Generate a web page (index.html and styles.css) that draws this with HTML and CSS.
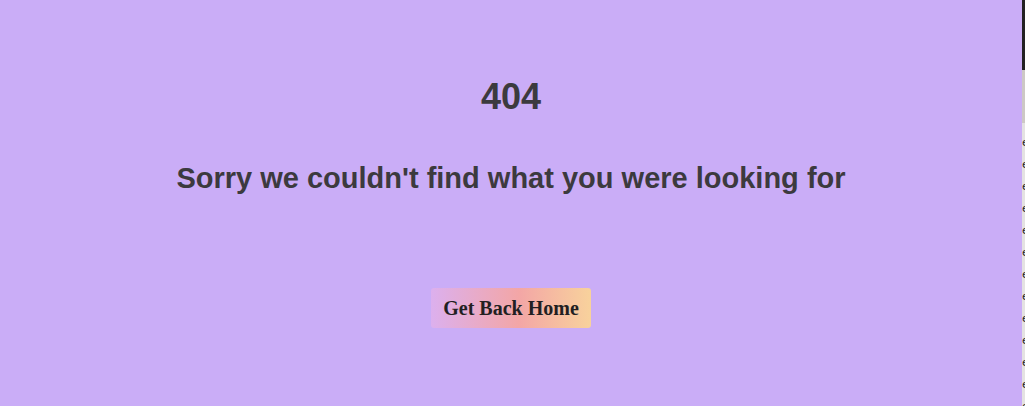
FILE: index.html
```html
<!DOCTYPE html>
<html lang="en">
<head>
<meta charset="utf-8">
<title>404</title>
<link rel="stylesheet" href="styles.css">
</head>
<body>
<div class="page">
  <main class="main">
    <h1 class="code">404</h1>
    <h2 class="message">Sorry we couldn't find what you were looking for</h2>
    <a class="home-btn" href="#">Get Back Home</a>
  </main>
  <aside class="edge">
    <div class="edge-dark"></div>
    <div class="edge-gray"></div>
    <div class="edge-text">e<br>e<br>e<br>e<br>e<br>e<br>e<br>e<br>e<br>e<br>e<br>e<br>e</div>
  </aside>
</div>
</body>
</html>
```
FILE: styles.css
```css
html, body {
  margin: 0;
  padding: 0;
  height: 100%;
  overflow: hidden;
}
body {
  background: #caadf7;
  font-family: "Liberation Sans", Arial, Helvetica, sans-serif;
}
.page {
  display: flex;
  height: 406px;
}
.main {
  width: 1022px;
  flex: none;
  background: #caadf7;
  display: flex;
  flex-direction: column;
  align-items: center;
  padding-top: 77px;
  box-sizing: border-box;
}
.code {
  margin: 0;
  font-size: 36px;
  line-height: 40px;
  font-weight: 700;
  color: #3c3a3e;
}
.message {
  margin: 44px 0 0;
  font-size: 29px;
  line-height: 34px;
  font-weight: 700;
  color: #3c3a3e;
}
.home-btn {
  margin-top: 93px;
  width: 160px;
  height: 40px;
  display: flex;
  align-items: center;
  justify-content: center;
  border-radius: 3px;
  background: linear-gradient(to right, #dcb0ee 0%, #f3a6a6 55%, #f8d29c 100%);
  color: #221f22;
  text-decoration: none;
  font-family: "Liberation Serif", "Times New Roman", serif;
  font-weight: 700;
  font-size: 20px;
}
.edge {
  flex: 1;
  display: flex;
  flex-direction: column;
  overflow: hidden;
  background: #e4e2e2;
}
.edge-dark {
  height: 70px;
  background: #232223;
  flex: none;
}
.edge-gray {
  height: 53px;
  background: #cdc8c5;
  flex: none;
}
.edge-text {
  padding-top: 9px;
  font-family: "DejaVu Sans", sans-serif;
  font-size: 11px;
  line-height: 22px;
  color: #222;
  white-space: nowrap;
}
```
